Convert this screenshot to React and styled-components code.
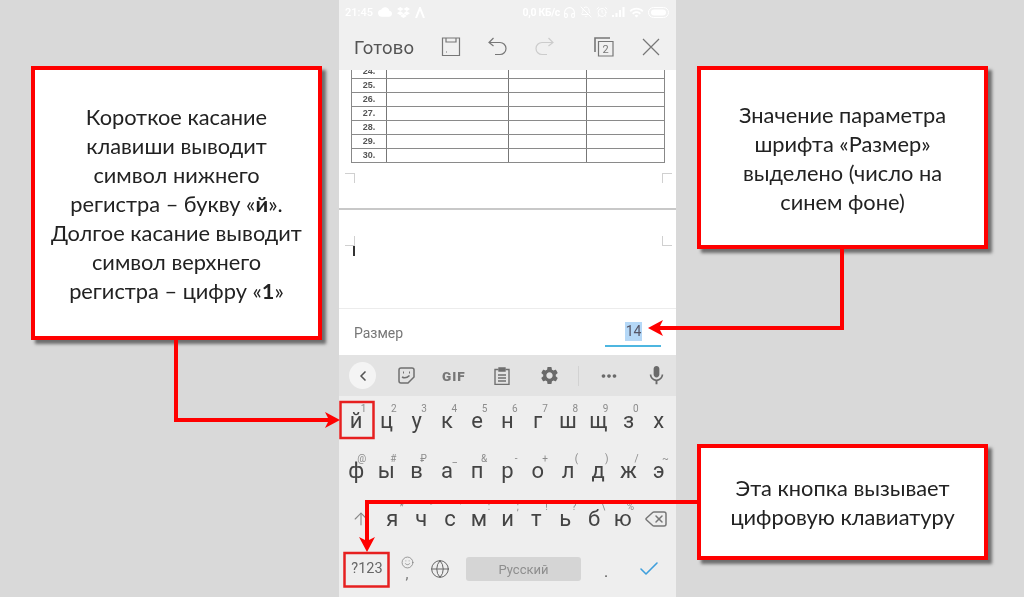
import React from 'react';
import styled, { createGlobalStyle } from 'styled-components';
import { MdCloud, MdSettings, MdMic, MdWifi, MdMoreHoriz } from 'react-icons/md';
import { FaDropbox } from 'react-icons/fa';
import { Headphones, BellOff, AlarmClock, ChevronLeft, ArrowUp, Delete, Globe, Check, Smile } from 'lucide-react';

const GlobalStyle = createGlobalStyle`
  html, body {
    margin: 0;
    padding: 0;
    background: #d9d9d9;
  }
`;

const Page = styled.div`
  position: relative;
  width: 1024px;
  height: 597px;
  overflow: hidden;
  display: grid;
  grid-template-columns: 339px 337px 348px;
  background: #d9d9d9;
`;

const LeftColumn = styled.div`
  padding: 66px 0 0 31px;
`;

const RightColumn = styled.div`
  display: flex;
  flex-direction: column;
  padding: 66px 0 0 21px;
  gap: 195px;
`;

const Callout = styled.div`
  box-sizing: border-box;
  width: 291px;
  height: ${(props) => props.h}px;
  border: 4px solid #ff0000;
  background: #fff;
  box-shadow: 4px 4px 3px #6e6e6e;
  display: flex;
  align-items: center;
  justify-content: center;
  text-align: center;
  font-family: 'Lato', 'Open Sans', sans-serif;
  font-size: 21.8px;
  line-height: 29px;
  color: #222;
  filter: blur(0.3px);
`;

const Phone = styled.div`
  display: flex;
  flex-direction: column;
  height: 597px;
  background: #fff;
  filter: blur(0.5px);
  font-family: 'Roboto', sans-serif;
`;

const TopBars = styled.div`
  height: 70px;
  background: #f0f0f0;
  flex: none;
  position: relative;
  z-index: 1;
`;

const StatusBar = styled.div`
  height: 23px;
  box-sizing: border-box;
  padding: 1px 6px 0;
  display: flex;
  align-items: center;
  color: #fff;
  font-size: 11px;
  font-weight: 500;
  gap: 5px;
`;

const StatusSpacer = styled.div`
  flex: 1;
`;

const SpeedLabel = styled.span`
  font-size: 10.5px;
  font-weight: 700;
  letter-spacing: -0.3px;
  margin-right: -2px;
`;

const StatusIcons = styled.div`
  display: flex;
  align-items: center;
  gap: 4px;
`;

const ToolBar = styled.div`
  height: 47px;
  display: flex;
  align-items: center;
  padding: 0 15px;
  color: #666;
`;

const DoneLabel = styled.span`
  font-size: 18.500px;
  color: #555;
  width: 87px;
  margin-top: 2px;
  letter-spacing: 0.2px;
`;

const ToolIcon = styled.div`
  width: ${(props) => props.w}px;
  display: flex;
  align-items: center;
  justify-content: flex-start;
  flex: none;
`;

const Sheet = styled.div`
  height: 238px;
  flex: none;
  overflow: hidden;
  position: relative;
`;

const SheetTable = styled.div`
  margin: -5px 0 0 12px;
  width: 314px;
  border-left: 1px solid #888;
  border-right: 1px solid #888;
  box-sizing: border-box;
`;

const TableRow = styled.div`
  display: grid;
  grid-template-columns: 34px 122px 78px 1fr;
  height: 14px;
  box-sizing: border-box;
  border-bottom: 1px solid #8a8a8a;
`;

const TableCell = styled.div`
  border-left: ${(props) => (props.$first ? 'none' : '1px solid #777')};
  font-family: 'Liberation Sans', sans-serif;
  font-size: 9px;
  font-weight: 700;
  line-height: 13px;
  text-align: center;
  color: #555;
`;

const PageMark = styled.div`
  position: absolute;
  width: 9px;
  height: 9px;
  left: ${(props) => props.$x}px;
  top: ${(props) => props.$y}px;
  border-style: solid;
  border-color: #d0d0d0;
  border-width: ${(props) => props.$edges};
`;

const PageGap = styled.div`
  position: absolute;
  left: 0;
  right: 0;
  top: 138px;
  height: 2px;
  background: #c8c8c8;
`;

const Cursor = styled.div`
  position: absolute;
  left: 14px;
  top: 176px;
  width: 2px;
  height: 10px;
  background: #333;
`;

const SizeRow = styled.div`
  height: 47px;
  flex: none;
  box-sizing: border-box;
  border-top: 1px solid #ececec;
  display: flex;
  align-items: center;
  justify-content: space-between;
  padding: 0 15px;
`;

const SizeLabel = styled.span`
  font-size: 14px;
  color: #777;
  margin-top: 2px;
`;

const SizeField = styled.div`
  width: 56px;
  height: 27px;
  border-bottom: 2px solid #4db6e0;
  display: flex;
  justify-content: flex-end;
  align-items: center;
  box-sizing: content-box;
`;

const SizeValue = styled.span`
  background: #b5d8f7;
  color: #556;
  font-size: 14px;
  line-height: 19px;
  padding: 0 0.500px;
  margin: 0 19px -1px 0;
`;

const KeyboardBar = styled.div`
  height: 41px;
  flex: none;
  background: #e3e3e3;
  display: flex;
  align-items: center;
  color: #666;
`;

const BackButton = styled.div`
  width: 27px;
  height: 27px;
  margin: 0 22px 0 10px;
  border-radius: 50%;
  background: #f4f4f4;
  display: flex;
  align-items: center;
  justify-content: center;
  color: #555;
`;

const BarSlot = styled.div`
  width: ${(props) => props.$w}px;
  flex: none;
  display: flex;
  align-items: center;
  color: #6a6a6a;
`;

const GifLabel = styled.span`
  font-size: 13.500px;
  font-weight: 900;
  color: #777;
  letter-spacing: 1px;
`;

const BarDivider = styled.div`
  width: 1px;
  height: 20px;
  background: #d2d2d2;
  margin-right: 19px;
  flex: none;
`;

const Keys = styled.div`
  flex: 1;
  background: #eeeeee;
  display: flex;
  flex-direction: column;
`;

const KeyRow = styled.div`
  height: ${(props) => props.$h}px;
  flex: none;
  display: flex;
  align-items: center;
  padding: ${(props) => props.$pad || '0 2px'};
  color: #444;
`;

const Key = styled.div`
  position: relative;
  flex: ${(props) => (props.$w ? `0 0 ${props.$w}px` : 1)};
  height: 100%;
  display: flex;
  align-items: center;
  justify-content: center;
  font-size: 22px;
  line-height: 24px;
  color: #444;
`;

const Hint = styled.span`
  position: absolute;
  top: ${(props) => props.$top}px;
  right: ${(props) => props.$right ?? 5}px;
  font-size: 10px;
  line-height: 10px;
  color: #8c8c8c;
`;

const SymbolsKey = styled.div`
  flex: 0 0 50px;
  text-align: center;
  font-size: 14.500px;
  color: #666;
  margin-top: -1px;
`;

const SmileComma = styled.div`
  flex: 0 0 30px;
  display: flex;
  flex-direction: column;
  align-items: center;
  color: #777;
  font-size: 15px;
  line-height: 10px;
  margin-top: -4px;
`;

const SpaceBar = styled.div`
  width: 115px;
  height: 24px;
  flex: none;
  margin-left: 8px;
  background: #d5d5d5;
  border-radius: 3px;
  display: flex;
  align-items: center;
  justify-content: center;
  font-size: 13px;
  color: #8e8e8e;
`;

const Period = styled.div`
  flex: 0 0 50px;
  text-align: center;
  font-size: 16px;
  color: #555;
  margin-top: 4px;
`;

const Connectors = styled.svg`
  position: absolute;
  inset: 0;
  pointer-events: none;
`;

const topRow = [['й', '1'], ['ц', '2'], ['у', '3'], ['к', '4'], ['е', '5'], ['н', '6'], ['г', '7'], ['ш', '8'], ['щ', '9'], ['з', '0'], ['х', '']];
const midRow = [['ф', '@'], ['ы', '#'], ['в', '₽'], ['а', '_'], ['п', '&'], ['р', '-'], ['о', '+'], ['л', '('], ['д', ')'], ['ж', '/'], ['э', '~']];
const lowRow = [['я', '*'], ['ч', '"'], ['с', "'"], ['м', ':'], ['и', ';'], ['т', '!'], ['ь', '?'], ['б', '\\'], ['ю', '%']];
const rowNumbers = [24, 25, 26, 27, 28, 29, 30];

// small hand-drawn glyphs, the icon packages have nothing close enough
const SaveIcon = () => (
  <svg width="20" height="20" viewBox="0 0 20 20" fill="none" stroke="#777" strokeWidth="1.2">
    <path d="M1.5 1h17v17.5h-17z" />
    <path d="M5 1v4h10V1" />
    <path d="M5 15h1" />
  </svg>
);

const UndoIcon = ({ color }) => (
  <svg width="20" height="20" viewBox="0 0 20 20" fill="none" stroke={color} strokeWidth="1.2">
    <path d="M1 5.5h11a6 6 0 0 1 0 12H7" />
    <path d="M5.5 1L1 5.5 5.5 9" />
  </svg>
);

const RedoIcon = ({ color }) => (
  <svg width="20" height="20" viewBox="0 0 20 20" fill="none" stroke={color} strokeWidth="1.2">
    <path d="M19 5.5H8a6 6 0 0 0 0 12h5" />
    <path d="M14.5 1L19 5.5 14.5 9" />
  </svg>
);

const PagesIcon = () => (
  <svg width="20" height="20" viewBox="0 0 20 20" fill="none" stroke="#777" strokeWidth="1.2">
    <path d="M1 15V1h15" strokeWidth="1.6" />
    <path d="M4.5 4.5h14.500v14.500H4.500z" />
    <text x="11.700" y="16" fontSize="11" fontFamily="Roboto" fill="#777" stroke="none" textAnchor="middle">2</text>
  </svg>
);

const CloseIcon = () => (
  <svg width="18" height="18" viewBox="0 0 18 18" fill="none" stroke="#777" strokeWidth="1.2">
    <path d="M1 1l16 16M17 1L1 17" />
  </svg>
);

const StickerIcon = () => (
  <svg width="17" height="17" viewBox="0 0 17 17" fill="none" stroke="#707070" strokeWidth="1.500">
    <path d="M3 1h11a2 2 0 0 1 2 2v7l-6 6H3a2 2 0 0 1-2-2V3a2 2 0 0 1 2-2z" />
    <path d="M4 10c2.500 1.500 5 1 7.500-1.500" />
    <path d="M5 5.500h1M11 5.500h1" strokeWidth="2" />
  </svg>
);

const ClipboardIcon = () => (
  <svg width="16" height="18" viewBox="0 0 16 18" fill="none" stroke="#707070" strokeWidth="1.400">
    <path d="M4.500 2.500H1v15h14v-15h-3.500" />
    <path d="M5 1h6v3H5z" fill="#707070" />
    <path d="M4 8h8M4 11h8M4 14h8" />
  </svg>
);

const Signal = () => (
  <svg width="13" height="10" viewBox="0 0 13 10" fill="#fff">
    <path d="M0 8h2v2H0zM3.500 6h2v4h-2zM7 3h2v7H7zM10.500 0h2v10h-2z" />
  </svg>
);

const Battery = () => (
  <svg width="22" height="11" viewBox="0 0 22 11">
    <rect x="0.500" y="0.500" width="20" height="10" rx="5" fill="none" stroke="#fff" />
    <rect x="3" y="2.500" width="15" height="6" rx="3" fill="#fff" />
  </svg>
);

const LambdaIcon = () => (
  <svg width="10" height="11" viewBox="0 0 10 11" fill="none" stroke="#fff" strokeWidth="2">
    <path d="M1 11L5 1l4 10" />
  </svg>
);

export default function App() {
  return (
    <Page>
      <GlobalStyle />
      <LeftColumn>
        <Callout h={274}>
          <div>
            Короткое касание<br />
            клавиши выводит<br />
            символ нижнего<br />
            регистра – букву «<b>й</b>».<br />
            Долгое касание выводит<br />
            символ верхнего<br />
            регистра – цифру «<b>1</b>»
          </div>
        </Callout>
      </LeftColumn>

      <Phone>
        <TopBars>
          <StatusBar>
            <span>21:45</span>
            <MdCloud size={14} />
            <FaDropbox size={13} />
            <LambdaIcon />
            <StatusSpacer />
            <SpeedLabel>0,0 КБ/с</SpeedLabel>
            <StatusIcons>
              <Headphones size={13} />
              <BellOff size={12} />
              <AlarmClock size={12} />
              <Signal />
              <MdWifi size={15} />
              <Battery />
            </StatusIcons>
          </StatusBar>
          <ToolBar>
            <DoneLabel>Готово</DoneLabel>
            <ToolIcon w={47}><SaveIcon /></ToolIcon>
            <ToolIcon w={46}><UndoIcon color="#777" /></ToolIcon>
            <ToolIcon w={60}><RedoIcon color="#ccc" /></ToolIcon>
            <ToolIcon w={48}><PagesIcon /></ToolIcon>
            <ToolIcon w={18}><CloseIcon /></ToolIcon>
          </ToolBar>
        </TopBars>

        <Sheet>
          <SheetTable>
            {rowNumbers.map((n) => (
              <TableRow key={n}>
                <TableCell $first>{n}.</TableCell>
                <TableCell />
                <TableCell />
                <TableCell />
              </TableRow>
            ))}
          </SheetTable>
          <PageMark $x={6} $y={103} $edges="1px 1px 0 0" />
          <PageMark $x={323} $y={103} $edges="1px 0 0 1px" />
          <PageGap />
          <PageMark $x={6} $y={166} $edges="0 1px 1px 0" />
          <PageMark $x={323} $y={166} $edges="0 0 1px 1px" />
          <Cursor />
        </Sheet>

        <SizeRow>
          <SizeLabel>Размер</SizeLabel>
          <SizeField><SizeValue>14</SizeValue></SizeField>
        </SizeRow>

        <KeyboardBar>
          <BackButton><ChevronLeft size={16} strokeWidth={2.500} /></BackButton>
          <BarSlot $w={44}><StickerIcon /></BarSlot>
          <BarSlot $w={52}><GifLabel>GIF</GifLabel></BarSlot>
          <BarSlot $w={45}><ClipboardIcon /></BarSlot>
          <BarSlot $w={39}><MdSettings size={21} /></BarSlot>
          <BarDivider />
          <BarSlot $w={46.500}><MdMoreHoriz size={22} /></BarSlot>
          <BarSlot $w={24}><MdMic size={23} /></BarSlot>
        </KeyboardBar>

        <Keys>
          <KeyRow $h={50}>
            {topRow.map(([letter, hint]) => (
              <Key key={letter}>{letter}<Hint $top={8}>{hint}</Hint></Key>
            ))}
          </KeyRow>
          <KeyRow $h={49}>
            {midRow.map(([letter, hint]) => (
              <Key key={letter}>{letter}<Hint $top={8}>{hint}</Hint></Key>
            ))}
          </KeyRow>
          <KeyRow $h={48} $pad="0 0 0 5px">
            <Key $w={34}><ArrowUp size={20} strokeWidth={1.300} color="#888" /></Key>
            {lowRow.map(([letter, hint]) => (
              <Key key={letter} $w={28.800}>{letter}<Hint $top={7} $right={3}>{hint}</Hint></Key>
            ))}
            <Key $w={37}><Delete size={24} strokeWidth={1.500} color="#777" /></Key>
          </KeyRow>
          <KeyRow $h={52} $pad="0 0 12px 3px">
            <SymbolsKey>?123</SymbolsKey>
            <SmileComma>
              <Smile size={13} strokeWidth={1.300} />
              <span>,</span>
            </SmileComma>
            <Key $w={36}><Globe size={20} strokeWidth={1.200} color="#666" /></Key>
            <SpaceBar>Русский</SpaceBar>
            <Period>.</Period>
            <Key $w={36}><Check size={24} strokeWidth={1.600} color="#3f9fdc" /></Key>
          </KeyRow>
        </Keys>
      </Phone>

      <RightColumn>
        <Callout h={183}>
          <div>
            Значение параметра<br />
            шрифта «Размер»<br />
            выделено (число на<br />
            синем фоне)
          </div>
        </Callout>
        <Callout h={116}>
          <div>
            Эта кнопка вызывает<br />
            цифровую клавиатуру
          </div>
        </Callout>
      </RightColumn>

      <Connectors width="1024" height="597" viewBox="0 0 1024 597" fill="none">
        <g stroke="#ff0000" strokeWidth="4">
          <path d="M176 340V420H332" />
          <path d="M842 249V328H656" />
          <path d="M697 502H367V544" />
        </g>
        <g fill="#ff0000">
          <path d="M340 420l-15-8 4 8-4 8z" />
          <path d="M648 328l15-8-4 8 4 8z" />
          <path d="M367 552l-8-15 8 4 8-4z" />
        </g>
        <g stroke="#e62020" strokeWidth="2.500">
          <rect x="340.500" y="402" width="33" height="36" />
          <rect x="344.500" y="553" width="44" height="33.500" />
        </g>
      </Connectors>
    </Page>
  );
}
